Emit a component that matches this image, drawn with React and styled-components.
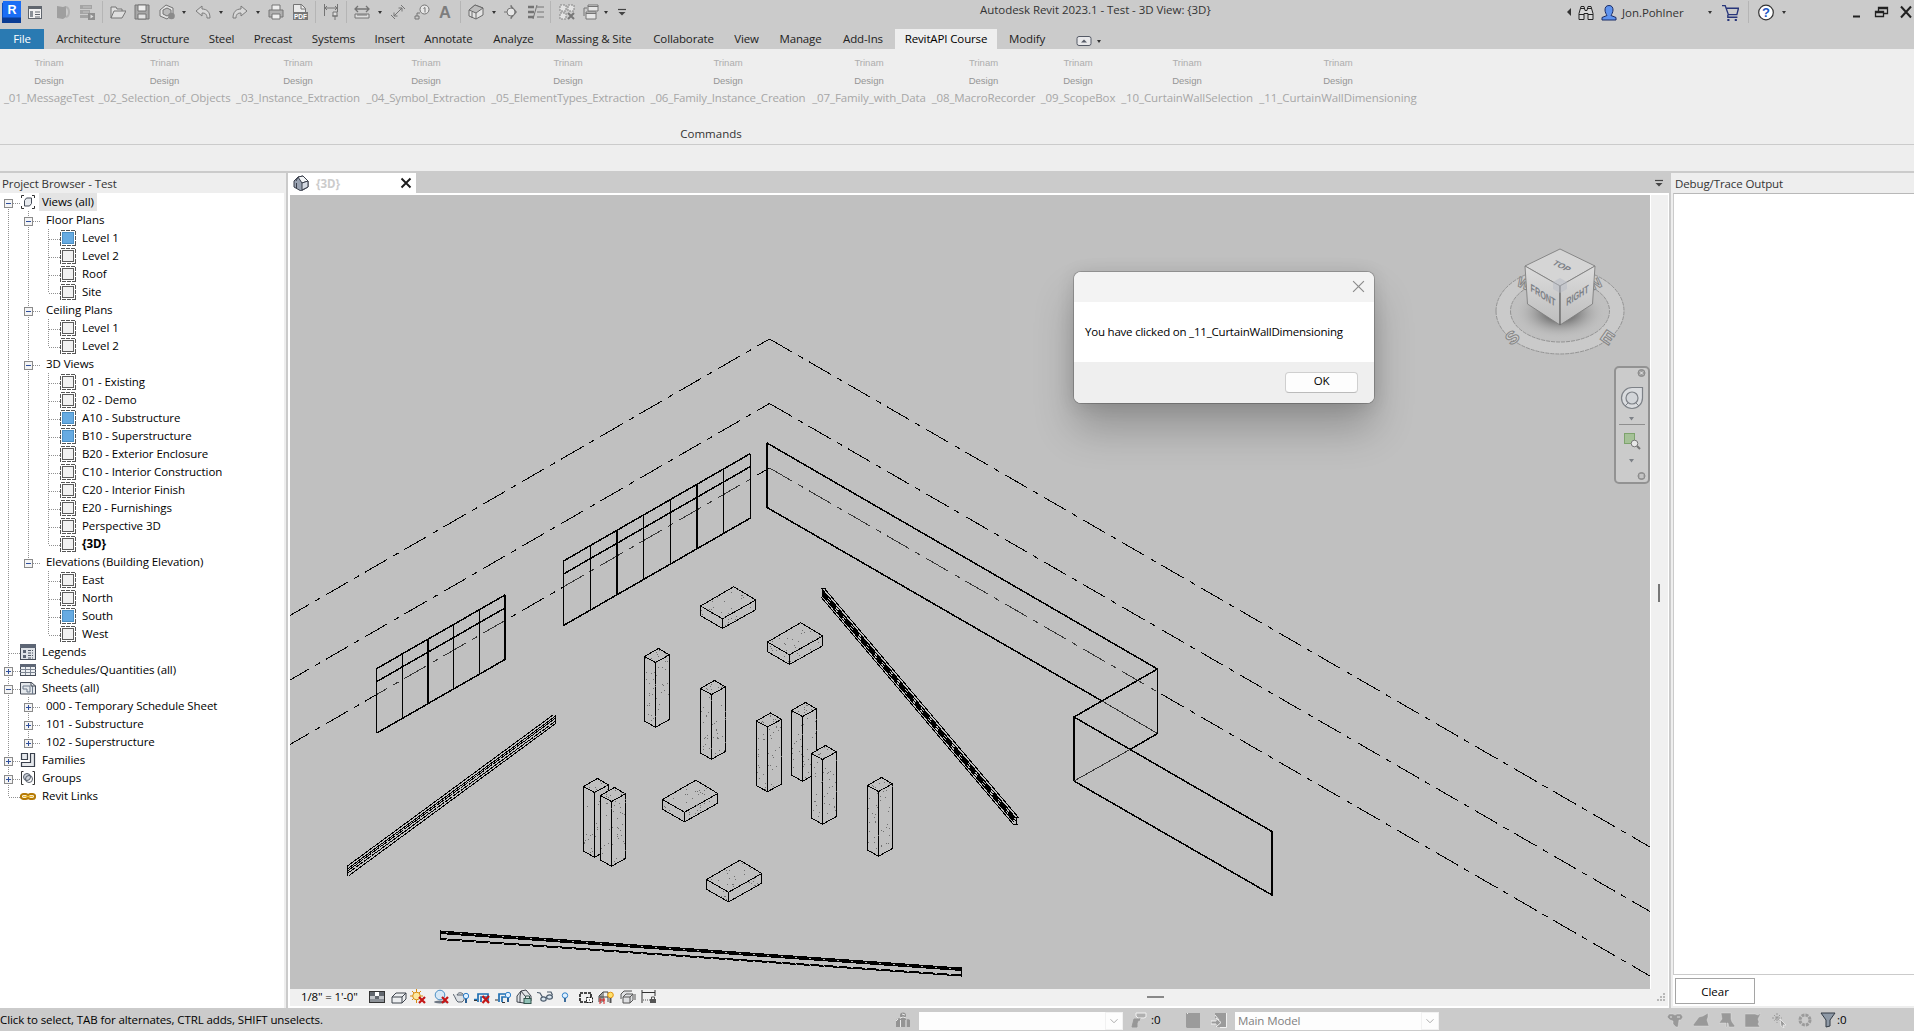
import React from "react";
import styled, { createGlobalStyle, css } from "styled-components";

const Global = createGlobalStyle`
  html, body { margin: 0; padding: 0; overflow: hidden; }
  * { box-sizing: border-box; }
  body { font-family: "Open Sans", "Noto Sans", sans-serif; font-size: 11.5px; color: #000; }
`;

const Window = styled.div`
  width: 1914px;
  height: 1031px;
  display: flex;
  flex-direction: column;
  background: #cbcbcb;
  white-space: nowrap;
`;

/* ---------- title bar ---------- */
const TitleBar = styled.header`
  height: 29px;
  display: flex;
  align-items: flex-start;
  flex: none;
`;
const QuickAccess = styled.div`
  width: 980px;
  display: flex;
  padding-left: 2px;
`;
const Slot = styled.span`
  flex: none;
  width: ${(p) => p.$w}px;
  height: 24px;
  margin-left: ${(p) => p.$gap || 0}px;
  display: flex;
  align-items: center;
  justify-content: center;
`;
const Separator = styled.i`
  flex: none;
  width: 1px;
  height: ${(p) => p.$h || 22}px;
  margin-top: 1px;
  margin-left: ${(p) => p.$gap}px;
  background: #b5b5b5;
`;
const Caret = styled.i`
  width: 0;
  height: 0;
  border: ${(p) => p.$size || 2.5}px solid transparent;
  border-top: 3px solid ${(p) => p.$c || "#333"};
  border-bottom: 0;
`;
const DocTitle = styled.h1`
  margin: 0;
  width: 586px;
  font-size: 11.5px;
  font-weight: 400;
  line-height: 20px;
  letter-spacing: -0.05px;
  color: #333;
`;
const Account = styled.div`
  display: flex;
  flex: 1;
`;
const UserName = styled.span`
  width: 63px;
  line-height: 25px;
  margin-left: 5px;
  letter-spacing: -0.05px;
  color: #333;
`;

/* ---------- ribbon ---------- */
const TabStrip = styled.nav`
  height: 20px;
  display: flex;
  flex: none;
`;
const Tab = styled.span`
  width: ${(p) => p.$w}px;
  margin-left: ${(p) => p.$gap || 0}px;
  line-height: 20px;
  letter-spacing: -0.13px;
  text-align: center;
  color: #222;
  ${(p) => p.$kind === "file" && css`background: #2a7ab2; color: #fff;`}
  ${(p) => p.$kind === "active" && css`background: #eee; color: #000;`}
`;
const Ribbon = styled.section`
  height: 96px;
  flex: none;
  background: #eee;
  border-bottom: 1px solid #cbcbcb;
  display: flex;
  flex-direction: column;
`;
const Commands = styled.div`
  height: 76px;
  display: flex;
  gap: 6px;
  padding: 4px 0 0 5px;
`;
const Command = styled.div`
  width: ${(p) => p.$w}px;
  display: flex;
  flex-direction: column;
  align-items: center;
  color: #a6a6a6;
`;
const Maker = styled.span`
  height: 18px;
  line-height: 19px;
  font-size: 9.5px;
  font-family: "Liberation Sans", Arial, sans-serif;
  color: ${(p) => p.$c};
`;
const CommandName = styled.span`
  height: 16px;
  line-height: 17px;
  letter-spacing: ${(p) => p.$ls}px;
`;
const PanelName = styled.span`
  width: 1422px;
  text-align: center;
  line-height: 18px;
  color: #333;
`;
const OptionsBar = styled.div`
  height: 26px;
  flex: none;
  background: #eee;
`;

/* ---------- work area ---------- */
const Workspace = styled.main`
  height: 837px;
  flex: none;
  display: flex;
  padding-top: 2px;
`;
const Browser = styled.aside`
  width: 286px;
  display: flex;
  flex-direction: column;
  background: #fff;
  border-right: 2px solid #eee;
`;
const PaneTitle = styled.div`
  height: 20px;
  flex: none;
  padding-left: ${(p) => p.$indent || 2}px;
  line-height: 21px;
  letter-spacing: -0.11px;
  background: #eee;
  color: #333;
  margin-right: ${(p) => p.$bleed || 0}px;
`;
const Row = styled.div`
  height: 18px;
  display: flex;
  align-items: center;
`;
const RowLabel = styled.span`
  height: 18px;
  line-height: 17px;
  letter-spacing: -0.07px;
  margin-left: 3px;
  padding: 0 3px;
  font-weight: ${(p) => (p.$bold ? 700 : 400)};
  background: ${(p) => (p.$hot ? "#e4e4e4" : "transparent")};
`;

const Document = styled.section`
  width: 1381px;
  margin-left: 2px;
  display: flex;
  flex-direction: column;
`;
const DocTabs = styled.div`
  height: 20px;
  display: flex;
  justify-content: space-between;
`;
const DocTab = styled.div`
  width: 128px;
  background: #fff;
  display: flex;
  align-items: center;
  padding-left: 5px;
`;
const DocTabName = styled.b`
  flex: 1;
  margin-left: 7px;
  font-weight: 700;
  color: #cccccc;
`;
const TabMenu = styled.span`
  display: flex;
  align-items: center;
  padding-right: 2px;
`;
const ViewFrame = styled.div`
  flex: 1;
  display: flex;
  flex-direction: column;
  background: #f0f0f0;
  border: 2px solid #fff;
  border-right-width: 1px;
`;
const ViewMain = styled.div`
  height: 794px;
  display: flex;
`;
const Canvas = styled.div`
  position: relative;
  width: 1360px;
  height: 794px;
  background: #c0c0c0;
  & > svg { display: block; }
`;
const VScroll = styled.div`
  width: 17px;
  border-left: 1px solid #fff;
  display: flex;
  justify-content: center;
  padding-top: 389px;
  &::after { content: ""; width: 2px; height: 18px; background: #777; }
`;
const ViewBar = styled.div`
  height: 17px;
  display: flex;
  align-items: center;
  padding-left: 11px;
  padding-bottom: 1px;
`;
const Scale = styled.span`
  width: 68px;
  line-height: 16px;
  letter-spacing: -0.15px;
`;
const HThumb = styled.i`
  width: 17px;
  height: 2px;
  margin-left: 490px;
  background: #888;
`;
const Grip = styled.i`
  margin-left: auto;
  margin-right: 3px;
  display: flex;
`;

const Output = styled.aside`
  width: 243px;
  margin-left: 2px;
  display: flex;
  flex-direction: column;
  background: #eee;
`;
const OutputBody = styled.div`
  flex: 1;
  margin-left: 2px;
  border-top: 1px solid #b8b8b8;
  border-left: 1px solid #cbcbcb;
  border-bottom: 1px solid #cbcbcb;
  background: #fff;
`;
const OutputFoot = styled.div`
  height: 31px;
  margin: 0 0 2px 2px;
  padding: 3px 0 0 2px;
  background: #fff;
`;
const ClearButton = styled.button`
  width: 80px;
  height: 26px;
  padding: 0;
  font: inherit;
  background: #fff;
  border: 1px solid #a5a5a5;
`;

/* ---------- dialog ---------- */
const Dialog = styled.div`
  position: absolute;
  left: 784px;
  top: 77px;
  width: 300px;
  height: 131px;
  display: flex;
  flex-direction: column;
  border-radius: 7px;
  overflow: hidden;
  background: #fff;
  box-shadow: 0 0 0 1px rgba(0, 0, 0, 0.2), 0 26px 40px rgba(0, 0, 0, 0.23), 0 2px 18px rgba(0, 0, 0, 0.12);
`;
const DialogTitle = styled.div`
  height: 30px;
  background: #f3f3f3;
  display: flex;
  justify-content: flex-end;
  padding: 8px 9px 0 0;
`;
const DialogText = styled.p`
  flex: 1;
  margin: 0;
  padding-left: 11px;
  line-height: 60px;
  letter-spacing: -0.21px;
`;
const DialogFoot = styled.div`
  height: 42px;
  background: #efefef;
  display: flex;
  justify-content: flex-end;
  padding: 10px 16px 0 0;
`;
const OkButton = styled.button`
  width: 73px;
  height: 21px;
  padding: 0 0 2px;
  font: inherit;
  letter-spacing: -0.3px;
  line-height: 16px;
  background: #fdfdfd;
  border: 1px solid #cfcfcf;
  border-bottom-color: #bbb;
  border-radius: 4px;
`;
const CubeLayer = styled.div`
  position: absolute;
  left: 1200px;
  top: 45px;
`;
const NavBar = styled.div`
  position: absolute;
  left: 1324px;
  top: 171px;
  width: 36px;
  height: 118px;
  border: 2px solid #929292;
  border-radius: 5px;
  background: #cbcbcb;
`;

/* ---------- status bar ---------- */
const StatusBar = styled.footer`
  height: 23px;
  display: flex;
  align-items: center;
`;
const Hint = styled.span`
  width: 895px;
  line-height: 26px;
  letter-spacing: -0.1px;
`;
const Combo = styled.div`
  width: 204px;
  height: 18px;
  margin: 2px 0 0 8px;
  padding-left: 3px;
  line-height: 17px;
  letter-spacing: -0.1px;
  background: #fdfdfd;
  color: #808080;
  display: flex;
  justify-content: space-between;
`;
const ComboArrow = styled.span`
  width: 18px;
  border: 1px solid #f1f1f1;
  display: flex;
  align-items: center;
  justify-content: center;
`;
const Count = styled.span`
  width: 12px;
  margin-left: ${(p) => p.$gap}px;
  line-height: 26px;
`;

/* ---------- icons ---------- */
const G = "#747474";
const DISABLED = { fill: "#999", stroke: "#e6e6e6", strokeWidth: 0.4 };
const ICONS = {
  revit: (
    <>
      <path d="M0 2l2-1v20l-2 1z" fill="#0a4fc0" />
      <rect x="1" y="0" width="18" height="17" fill="#1b6ef5" />
      <path d="M0 16.500h19V22H0z" fill="#0a3c94" />
      <text x="10" y="13" fontSize="12.500" fontWeight="700" textAnchor="middle" fill="#fff" fontFamily="Liberation Sans, sans-serif">R</text>
    </>
  ),
  props: (
    <>
      <rect x="1.500" y="2.500" width="13" height="12" fill="#f2f2f2" stroke="#60666e" />
      <path d="M1 2h14v3H1z" fill="#60666e" />
      <path d="M3 7h3v6H3z" fill="#8b9198" />
      <path d="M8 8h5M8 10.500h5M8 13h5" stroke="#60666e" />
    </>
  ),
  ghostA: (
    <>
      <path d="M2 2l6 1v12l-6-1zM8 3l3-1v11l-3 2z" fill="#9f9f9f" />
      <path d="M11 3c4 1 4 9 0 10" fill="none" stroke="#b2b2b2" strokeWidth="2" />
    </>
  ),
  ghostB: (
    <>
      <path d="M1 1h12v4H1zM1 6h10v4H1zM1 11h8v3H1z" fill="#a4a4a4" />
      <path d="M4 3h8M4 8h6" stroke="#c4c4c4" />
      <path d="M9 9h7v7H9z" fill="#8f8f8f" />
      <path d="M11.500 10.500l3 2-3 2z" fill="#ddd" />
    </>
  ),
  open: <path d="M1 14V3h5l1 2h5v2M1 14l3-7h12l-4 7z" fill="#dedede" stroke={G} />,
  save: (
    <>
      <path d="M1 1h14v14H1z" fill="#a6a6a6" stroke={G} />
      <path d="M4 1h8v6H4z" fill="#eee" stroke={G} />
      <path d="M4 10h8v5H4z" fill="#e2e2e2" stroke={G} />
    </>
  ),
  sync: (
    <>
      <path d="M1 6l6-5 7 3v6l-6 5-7-3z" fill="#e2e2e2" stroke={G} />
      <path d="M4 6l4-2 4 2v4l-4 2-4-2z" fill="#bbb" stroke={G} />
      <circle cx="12.500" cy="12" r="3.300" fill="#8a8a8a" />
    </>
  ),
  undo: <path d="M1 7l6-5v3c5 0 8 3 8 9h-3c0-4-2-5-5-5v3z" fill="#d8d8d8" stroke="#7c7c7c" />,
  redo: <path d="M15 7L9 2v3C4 5 1 8 1 14h3c0-4 2-5 5-5v3z" fill="#d8d8d8" stroke="#7c7c7c" />,
  print: (
    <>
      <path d="M4 6V1h8v5" fill="#eee" stroke={G} />
      <path d="M1 6h14v7H1z" fill="#b0b0b0" stroke={G} />
      <path d="M4 10h8v5H4z" fill="#eee" stroke={G} />
    </>
  ),
  pdf: (
    <>
      <path d="M1.500 .5h8l4 4v10h-12z" fill="#eaeaea" stroke={G} />
      <path d="M9 0v5h5" fill="none" stroke={G} />
      <rect x="1" y="8" width="15" height="8" fill="#777" />
      <text x="8.500" y="14.500" fontSize="6.500" fontWeight="700" textAnchor="middle" fill="#fff" fontFamily="Liberation Sans, sans-serif">PDF</text>
    </>
  ),
  align: (
    <>
      <path d="M1.500 0v12M14.500 0v8M2 4h12M4 2L2 4l2 2M12 2l2 2-2 2" fill="none" stroke={G} />
      <path d="M10 8h4v4h-4zM9 12h6M12 12v4" fill="#ddd" stroke={G} />
    </>
  ),
  measure: (
    <>
      <path d="M1 5h14M4 2L1 5l3 3M12 2l3 3-3 3" fill="none" stroke={G} strokeWidth="1.300" />
      <path d="M1 10h14v4H1zM4 10v2M6 10v2M8 10v2M10 10v2M12 10v2" fill="#ddd" stroke={G} />
    </>
  ),
  dim: <path d="M4 12l8-8M4 8.500V12h3.500M8.500 4H12v3.500M1 11l4 4M11 1l4 4" fill="none" stroke={G} />,
  tag: (
    <>
      <circle cx="10.500" cy="5.500" r="4.500" fill="#e6e6e6" stroke={G} />
      <path d="M6 9H3v3M1 12h4v3H1zM9.500 4.500l1.500-1v5" fill="none" stroke={G} />
    </>
  ),
  text: <text x="9" y="18.500" fontSize="18.500" fontWeight="700" textAnchor="middle" fill="#7d7d7d" fontFamily="Liberation Sans, sans-serif">A</text>,
  home: (
    <>
      <path d="M1 6l6-5 8 3v7l-7 4-7-3z" fill="#e3e3e3" stroke="#6a6a6a" />
      <path d="M1 6l6-5 8 3-7 5z" fill="#bdbdbd" stroke="#6a6a6a" />
      <path d="M8 9v6M4 8v6" fill="none" stroke="#6a6a6a" />
    </>
  ),
  section: (
    <>
      <path d="M8 1l6 7-6 7z" fill="#777" />
      <circle cx="8" cy="8" r="4" fill="#e6e6e6" stroke={G} />
      <path d="M1 8h3M8 1v2M8 13v2" stroke={G} />
    </>
  ),
  thin: (
    <>
      <path d="M0 3h6M0 8h6M0 13h6" stroke={G} strokeWidth="2.500" />
      <path d="M9 3h7M9 8h7M9 13h7M9 1L5 15" stroke={G} />
    </>
  ),
  closeViews: (
    <>
      <path d="M1 1h6v6H1zM9 1h6v6H9zM1 9h6v6H1z" fill="#e3e3e3" stroke="#848484" strokeDasharray="2 1" />
      <path d="M9 9l6 6M15 9l-6 6" stroke="#777" strokeWidth="2" />
    </>
  ),
  windows: (
    <>
      <path d="M5 1h10v6H5zM5 2.500h10" fill="#e6e6e6" stroke={G} />
      <path d="M3 8h10v7H3zM3 9.500h10" fill="#e6e6e6" stroke={G} />
      <path d="M1 12V4h3" fill="none" stroke={G} />
    </>
  ),
  custom: (
    <>
      <path d="M4 5.500h8" stroke="#444" strokeWidth="1.200" />
      <path d="M4.500 8h7L8 11.500z" fill="#444" />
    </>
  ),
  binoc: (
    <>
      <path d="M1 15V9l2-7h3l1 4h2l1-4h3l2 7v6h-5v-6H6v6z" fill="#d8d8d8" stroke="#222" />
      <path d="M3 4h3M10 4h3M1 10h5M10 10h5" stroke="#222" />
    </>
  ),
  user: <path d="M8 1c3 0 4 2 4 4.500S10.500 10 10 11l5 2v2.500H1V13l5-2C5.500 10 4 8 4 5.500S5 1 8 1z" fill="#5f93ee" stroke="#1b2c66" />,
  cart: (
    <>
      <path d="M0 1.500h3l3 8.500h8l1.500-6H4M5.500 10v2.500h9" fill="none" stroke="#27357a" strokeWidth="1.300" />
      <path d="M5 14h2v2H5zM12 14h2v2h-2z" fill="#27357a" />
    </>
  ),
  help: (
    <>
      <circle cx="8" cy="8" r="7.300" fill="#fff" stroke="#333" strokeWidth="1.200" />
      <text x="8" y="12.500" fontSize="13" fontWeight="700" textAnchor="middle" fill="#2257c4" fontFamily="Liberation Sans, sans-serif">?</text>
    </>
  ),
  min: <path d="M5 12.500h7" stroke="#222" strokeWidth="2" />,
  restore: <path d="M2.500 7.500h8v5h-8zM2.500 8.500h8M5.500 7V3.500h9v6h-4M5.500 4.500h9" fill="none" stroke="#222" strokeWidth="1.300" />,
  close: <path d="M3 2.500l10 11M13 2.500l-10 11" stroke="#222" strokeWidth="2" />,
  house: (
    <>
      <path d="M1 6l4-4 5-1 5 5v6l-7 4-7-4z" fill="#9aa3b2" stroke="#3a3f4b" />
      <path d="M5 2l5-1 5 5-6 2z" fill="#f3f5f7" stroke="#3a3f4b" />
      <path d="M9 8l6-2v6l-6 3z" fill="#d5dae2" stroke="#3a3f4b" />
      <path d="M3.500 8v5M5 2L3 6" stroke="#3a3f4b" />
    </>
  ),
  tabx: <path d="M3.500 3.500l9 9M12.500 3.500l-9 9" stroke="#1c1c1c" strokeWidth="1.900" />,
  views: (
    <>
      <path d="M4 1.500H1.500V4M12 1.500h2.500V4M4 14.500H1.500V12M12 14.500h2.500V12" fill="none" stroke="#333" />
      <path d="M4.500 6.500l2-2.500h5v5.500l-2 2.500h-5z" fill="#e8ebef" stroke="#444b57" />
    </>
  ),
  legends: (
    <>
      <rect x=".5" y=".5" width="15" height="15" fill="#dfe3e8" stroke="#444b57" />
      <path d="M0 0h16v4H0z" fill="#5d6675" />
      <path d="M3 6h3v3H3zM3 11h3v3H3z" fill="#5d6675" />
      <path d="M8 6.500h5M8 9h5M8 11.500h5M8 14h5" stroke="#4d5563" strokeDasharray="3 1" />
    </>
  ),
  sched: (
    <>
      <rect x=".5" y="2.500" width="15" height="11" fill="#eceff2" stroke="#444b57" />
      <path d="M0 2h16v3H0z" fill="#5d6675" />
      <path d="M0 7.500h16M0 10.500h16M5.500 5v8M10.500 5v8" stroke="#7c8593" />
    </>
  ),
  sheets: (
    <>
      <path d="M.5 2.500h11l4 3.500v8H.5z" fill="#e4e8ec" stroke="#444b57" />
      <path d="M3 6h7v6H7V9H3zM12.500 6v8" fill="none" stroke="#6d7a8c" />
      <path d="M11 2v4h5" fill="none" stroke="#444b57" />
    </>
  ),
  families: <path d="M1.500 1.500h6v6h-6zM10.500 1.500h4v13h-13v-4h9z" fill="#e6e9ed" stroke="#39404c" strokeWidth="1.200" />,
  groups: (
    <>
      <path d="M3.500 1.500h-2v13h2M12.500 1.500h2v13h-2" fill="none" stroke="#333" />
      <circle cx="7" cy="7" r="3.500" fill="#cfd4db" stroke="#555d6a" />
      <circle cx="9" cy="9" r="3.500" fill="none" stroke="#555d6a" />
    </>
  ),
  links: (
    <>
      <rect x="1" y="6" width="7" height="5" rx="2.500" fill="none" stroke="#b57a06" strokeWidth="2.200" />
      <rect x="8" y="6" width="7" height="5" rx="2.500" fill="none" stroke="#b57a06" strokeWidth="2.200" />
      <path d="M3 8.500h10" stroke="#edb92e" strokeWidth="1.500" />
    </>
  ),
  detail: (
    <>
      <rect x=".5" y="2.500" width="15" height="11" fill="#fff" stroke="#333" />
      <path d="M1 3h5v4H1zM10 3h5v4h-5zM6 7h4v3H6z" fill="#63686f" />
      <path d="M1 7h5v3H1zM10 7h5v3h-5z" fill="#c3c6ca" />
      <path d="M1 10h14v3H1z" fill="#8c9197" />
    </>
  ),
  box: <path d="M1 8l4-4h10v6l-4 4H1zM1 8h10v6M11 8l4-4" fill="#eceef0" stroke="#3f444d" />,
  sun: (
    <>
      <path d="M6.500 0v14M0 7h13M2 2l9 9M11 2l-9 9" stroke="#d88d12" />
      <circle cx="6.500" cy="7" r="3.800" fill="#fde9a0" stroke="#d88d12" />
      <path d="M9 8l6 6M15 8l-6 6" stroke="#c41616" strokeWidth="2.200" />
    </>
  ),
  shadow: (
    <>
      <ellipse cx="7" cy="13" rx="6" ry="1.500" fill="#6f7884" />
      <circle cx="7" cy="6" r="4.800" fill="#d7e8f6" stroke="#4d90c6" />
      <path d="M9 8l6 6M15 8l-6 6" stroke="#c41616" strokeWidth="2.200" />
    </>
  ),
  teapot: (
    <>
      <path d="M4 6h7c1 3 0 6-2 7H5C3 12 3 9 0 5M4 6c1-3 5-3 7 0" fill="#dde1e5" stroke="#59616c" />
      <circle cx="13" cy="7" r="2.700" fill="#dff0ff" stroke="#2e7fc8" />
      <path d="M13 10v4" stroke="#2b5f92" strokeWidth="2" />
    </>
  ),
  cropx: (
    <>
      <path d="M0 10.500h3M4 13V5h10v8M7 13V8h6" fill="none" stroke="#1f6fb2" strokeWidth="1.700" />
      <path d="M0 11.500h3" stroke="#333" />
      <path d="M8.500 7l6.500 7M15 7l-6.500 7" stroke="#c41616" strokeWidth="2.200" />
    </>
  ),
  cropb: (
    <>
      <path d="M4 13V5h7M7 13V8h4" fill="none" stroke="#1f6fb2" strokeWidth="1.700" />
      <path d="M0 11h3M7 13.500h3" stroke="#333" />
      <circle cx="13" cy="6" r="2.700" fill="#dff0ff" stroke="#2e7fc8" />
      <path d="M13 9v4" stroke="#2b5f92" strokeWidth="2" />
    </>
  ),
  lockhouse: (
    <>
      <path d="M1 7l4-5 5-1 5 6v5l-7 2-7-1z" fill="#e1e4e7" stroke="#3f444d" />
      <path d="M5 2L4 7v7M5 2l4 5" fill="none" stroke="#3f444d" />
      <rect x="8" y="9.500" width="7" height="5" fill="#8fc0b5" stroke="#33544c" />
      <path d="M9.500 9V7h4v2" fill="none" stroke="#33544c" />
    </>
  ),
  glasses: (
    <>
      <path d="M0 3.500l3 .5 3 5M10 3h4l1.500 3" fill="none" stroke="#4b5a6b" strokeWidth="1.200" />
      <ellipse cx="6.500" cy="10" rx="2.700" ry="2.200" fill="#d9e6f0" stroke="#4b5a6b" strokeWidth="1.200" />
      <ellipse cx="12.500" cy="8" rx="2.900" ry="2.200" fill="#d9e6f0" stroke="#4b5a6b" strokeWidth="1.200" />
    </>
  ),
  bulb: (
    <>
      <circle cx="8" cy="6.500" r="2.700" fill="#dff0ff" stroke="#2e7fc8" />
      <path d="M8 9v4" stroke="#2b5f92" strokeWidth="1.800" />
    </>
  ),
  dashed: (
    <>
      <path d="M2 4h11v9H2z" fill="none" stroke="#111" strokeWidth="1.600" strokeDasharray="3 1" />
      <rect x="8.500" y="8.500" width="6" height="5" fill="#fff" stroke="#111" strokeDasharray="2 1" />
      <path d="M11 11h1" stroke="#111" />
    </>
  ),
  grid: (
    <>
      <path d="M1 13V7l4-4h5v10M5 3v10M1 8h9M3 5v9" fill="none" stroke="#444" />
      <path d="M2 9v6M6 9v6M2 11h5" stroke="#d22" />
      <circle cx="12.500" cy="6" r="2.800" fill="#ffe16b" stroke="#e39412" />
      <path d="M12.500 9v5" stroke="#555" strokeWidth="2" />
    </>
  ),
  displace: <path d="M3 8h7v6H3zM3 8l3-3h7v6l-3 3M10 8l3-3M1 10V5l3-3h8M15 5v6" fill="#dfe0e2" stroke="#555" />,
  constraint: (
    <>
      <path d="M1 1v13M14 1v6M1 3.500h13" stroke="#333" />
      <path d="M2 11h7" stroke="#555" strokeDasharray="1 1" />
      <rect x="9" y="10" width="6" height="4" fill="#555" />
      <path d="M10.500 10V8h3v2" fill="none" stroke="#555" />
    </>
  ),
  people: (
    <>
      <path d="M1 15V8l3-2 2 1v8zM6 15V6h5v9zM11 15V8l2-1 2 1v7z" fill="#949494" />
      <circle cx="8" cy="3.500" r="3" fill="#949494" />
      <path d="M5.500 8v7M11 8v7M5 6l3-1 3 1M1 9l2-2M7 2l3 1" fill="none" stroke="#e8e8e8" />
    </>
  ),
  brush: (
    <>
      <path d="M5 1h10v4l-2 1H7L5 4z" fill="#b0b0b0" stroke="#f2f2f2" />
      <path d="M9 6l-1 3M3 7h5l-2 4v4H1z" fill="#979797" stroke="#979797" />
    </>
  ),
  book: (
    <>
      <path d="M1 1h14v15H2l-1-1z" fill="#9b9b9b" />
      <path d="M2 1.500h1" stroke="#eee" />
    </>
  ),
  arrowbox: (
    <>
      <path d="M4 1h11v14H4z" fill="#9b9b9b" />
      <path d="M0 9h5V6l5 4.500L5 15v-3H0z" fill="#9b9b9b" stroke="#f0f0f0" />
      <path d="M15.500 1v14.500H9M4 3l4 5" fill="none" stroke="#f0f0f0" />
    </>
  ),
  s1: (
    <>
      <path d="M0 5l2-3h4l2 1 2-1h4l2 3-2 3h-2l-1 7H9l-3-3V9L3 8z" {...DISABLED} />
      <path d="M3 5h2M10 5h3" stroke="#ddd" />
    </>
  ),
  s2: <path d="M0 13l6-8 4-1 5-3v4l-1 3 2 6H1z" {...DISABLED} />,
  s3: <path d="M2 1h10v6l1 3 3 4-1 1h-5l-1-4H8v4H7v-4H0l3-4z" {...DISABLED} />,
  s4: <path d="M0 2h10l3 1 3-2-3 6 1 3-1 2 2 3H0z" {...DISABLED} />,
  s5: (
    <>
      <path d="M6 1v10M1 6h10M3 3l6 6M9 3L3 9" fill="none" stroke="#999" strokeDasharray="2 1" />
      <path d="M9 7l6 6h-3l1 3-3-2z" fill="#999" stroke="#eee" strokeWidth=".8" />
    </>
  ),
  s6: <circle cx="8" cy="8" r="5" fill="none" stroke="#9b9b9b" strokeWidth="3" strokeDasharray="2.900 1" />,
  funnel: <path d="M1 1h14l-5 7v6l-4 1V8z" fill="#8e99a6" stroke="#333b45" />,
  chevron: <path d="M4 6l4 4 4-4" fill="none" stroke="#a0a0a0" />,
  dlgx: <path d="M3 3l10 10M13 3L3 13" stroke="#8c8c8c" strokeWidth="1.100" />,
  expand: (
    <>
      <rect x="1" y="3.500" width="14" height="9" rx="2" fill="#e8e8ea" stroke="#555a66" />
      <path d="M5 9.500h6l-3-3z" fill="#555a66" />
    </>
  ),
  grip: <path d="M6 0h2v2H6zM3 3h2v2H3zM6 3h2v2H6zM0 6h2v2H0zM3 6h2v2H3zM6 6h2v2H6z" fill="#b8b8b8" />,
};

const Icon = ({ name, w = 16, h = 16, box = "0 0 16 16" }) => (
  <svg width={w} height={h} viewBox={box}>
    {ICONS[name]}
  </svg>
);

/* ---------- data ---------- */
const QUICK = [
  ["props", 16, 6], ["ghostA", 16, 12], ["ghostB", 16, 8], ["|", 0, 7],
  ["open", 16, 7], ["save", 16, 8], ["sync", 17, 8], ["v", 7, 5], ["undo", 16, 8], ["v", 7, 6],
  ["redo", 16, 8], ["v", 7, 6], ["print", 16, 7], ["pdf", 16, 8], ["|", 0, 7],
  ["align", 16, 7], ["|", 0, 7], ["measure", 16, 7], ["v", 7, 6], ["dim", 16, 7], ["tag", 16, 8],
  ["text", 16, 7], ["|", 0, 7], ["home", 16, 7], ["v", 7, 6], ["section", 16, 6], ["thin", 17, 8],
  ["|", 0, 6], ["closeViews", 17, 7], ["windows", 17, 7], ["v", 7, 3], ["custom", 16, 5],
];
const TABS = [
  ["Architecture", 65], ["Structure", 48], ["Steel", 25], ["Precast", 38], ["Systems", 43],
  ["Insert", 29], ["Annotate", 49], ["Analyze", 41], ["Massing & Site", 79], ["Collaborate", 61],
  ["View", 25], ["Manage", 43], ["Add-Ins", 42],
];
const COMMANDS = [
  ["_01_MessageTest", 88, -0.15], ["_02_Selection_of_Objects", 131, -0.04], ["_03_Instance_Extraction", 124, -0.16],
  ["_04_Symbol_Extraction", 120, -0.14], ["_05_ElementTypes_Extraction", 152, -0.14], ["_06_Family_Instance_Creation", 156, -0.14],
  ["_07_Family_with_Data", 114, -0.12], ["_08_MacroRecorder", 103, -0.14], ["_09_ScopeBox", 74, -0.1],
  ["_10_CurtainWallSelection", 132, -0.1], ["_11_CurtainWallDimensioning", 158, -0.08],
];
const view = (label, on, extra) => ({ guides: ["line", "line", "tee"], check: true, on, label, ...extra });
const TREE = [
  { guides: ["minusTop"], icon: "views", label: "Views (all)", hot: true },
  { guides: ["line", "minus"], label: "Floor Plans" },
  view("Level 1", true), view("Level 2"), view("Roof"), view("Site", false, { last: true }),
  { guides: ["line", "minus"], label: "Ceiling Plans" },
  view("Level 1"), view("Level 2", false, { last: true }),
  { guides: ["line", "minus"], label: "3D Views" },
  view("01 - Existing"), view("02 - Demo"), view("A10 - Substructure", true), view("B10 - Superstructure", true),
  view("B20 - Exterior Enclosure"), view("C10 - Interior Construction"), view("C20 - Interior Finish"),
  view("E20 - Furnishings"), view("Perspective 3D"), view("{3D}", false, { bold: true, last: true }),
  { guides: ["line", "minusEnd"], label: "Elevations (Building Elevation)" },
  view("East", false, { open: true }), view("North", false, { open: true }),
  view("South", true, { open: true }), view("West", false, { open: true, last: true }),
  { guides: ["tee"], icon: "legends", label: "Legends" },
  { guides: ["plus"], icon: "sched", label: "Schedules/Quantities (all)" },
  { guides: ["minus"], icon: "sheets", label: "Sheets (all)" },
  { guides: ["line", "plus"], label: "000 - Temporary Schedule Sheet" },
  { guides: ["line", "plus"], label: "101 - Substructure" },
  { guides: ["line", "plusEnd"], label: "102 - Superstructure" },
  { guides: ["plus"], icon: "families", label: "Families" },
  { guides: ["plus"], icon: "groups", label: "Groups" },
  { guides: ["end"], icon: "links", label: "Revit Links" },
];

function Guide({ kind }) {
  const button = kind.startsWith("plus") || kind.startsWith("minus");
  const top = kind === "minusTop" ? 10 : 0;
  const bottom = kind === "end" || kind.endsWith("End") ? 10 : 18;
  return (
    <svg width="20" height="18" viewBox="0 0 20 18" shapeRendering="crispEdges">
      {kind !== "none" && (
        <path d={`M8.500 ${top}V${bottom}`} stroke="#909090" strokeDasharray="1 1" />
      )}
      {kind !== "none" && kind !== "line" && <path d="M9 10.500H20" stroke="#909090" strokeDasharray="1 1" />}
      {button && (
        <>
          <rect x="4.500" y="6.500" width="8" height="8" fill="#f4f4f4" stroke="#8a8a8a" />
          <path d={kind.startsWith("plus") ? "M6 10.500h5M8.500 8v5" : "M6 10.500h5"} stroke="#2f4f9c" />
        </>
      )}
    </svg>
  );
}

const ViewMark = ({ on }) => (
  <svg width="16" height="16" viewBox="0 0 16 16" shapeRendering="crispEdges">
    <rect x=".5" y=".5" width="15" height="15" fill="#fff" stroke="#555" strokeDasharray="4 1" />
    <rect x="2.500" y="2.500" width="11" height="11" fill={on ? "#67abe2" : "#f2f2f2"} stroke={on ? "#4a8fc4" : "#5c5c5c"} />
  </svg>
);

function TreeRow({ item }) {
  const guides = item.guides.map((g, i) => {
    if (item.check && i === 2 && item.last) return "end";
    if (item.check && i === 1 && item.open) return "none";
    return g;
  });
  return (
    <Row>
      {guides.map((g, i) => <Guide key={i} kind={g} />)}
      {item.check && <ViewMark on={item.on} />}
      {item.icon && <Icon name={item.icon} />}
      <RowLabel $hot={item.hot} $bold={item.bold}>{item.label}</RowLabel>
    </Row>
  );
}

/* ---------- model drawing ---------- */
const dots = (seed, n) => {
  let s = seed;
  const next = () => {
    s = (s * 16807) % 2147483647;
    return s / 2147483647;
  };
  for (let i = 0; i < 5; i++) next();
  return Array.from({ length: n }, () => [next(), next()]);
};

function Block({ x, y, top, right, center, h, n, seed }) {
  const p = (dx, dy) => `${x + dx} ${y + dy}`;
  const outline = `M${p(0, 0)}L${p(...top)}L${p(...right)}L${p(right[0], right[1] + h)}L${p(center[0], center[1] + h)}L${p(0, h)}Z`;
  const edges = `M${p(0, 0)}L${p(...center)}L${p(...right)}M${p(...center)}V${y + center[1] + h}`;
  const specks = dots(seed, n).map(([a, b]) => {
    const px = a * right[0];
    const base = px < center[0]
      ? (px / center[0]) * center[1]
      : center[1] + ((px - center[0]) / (right[0] - center[0])) * (right[1] - center[1]);
    return `M${Math.round(x + px)} ${Math.round(y + base + 1 + b * (h - 2))}h1v1h-1z`;
  });
  const topSpecks = dots(seed + 77, Math.round(right[0] / 3)).map(([a, b]) => {
    const tx = center[0] * a + top[0] * b;
    const ty = center[1] * a + top[1] * b;
    return `M${Math.round(x + tx)} ${Math.round(y + ty)}h1v1h-1z`;
  });
  return (
    <g>
      <path d={outline} fill="#c0c0c0" stroke="#000" />
      <path d={edges} fill="none" stroke="#000" />
      <path d={specks.join("") + topSpecks.join("")} fill="#707070" />
    </g>
  );
}

const COLUMNS = [
  [644.500, 656.500], [700.500, 688.500], [756.500, 721], [791.500, 710.500], [811.500, 753.500], [867.500, 785.500], [583.500, 786.500], [600.500, 795.500],
];
const FOOTINGS = [[700.500, 606], [767.500, 642], [662.500, 799.500], [706.500, 879.500]];

function Curtain({ x1, x2, y1, y2, thin, thick }) {
  const at = (x) => y1 + ((x - x1) * (y2 - y1)) / (x2 - x1);
  return (
    <g fill="none" stroke="#000">
      <path d={`M${x1} ${y1}L${x2} ${y2}M${x1} ${y1 + 13}L${x2} ${y2 + 13}M${x1} ${y1 + 64.500}L${x2} ${y2 + 64.500}`} strokeWidth="1.500" />
      <path d={thin.map((x) => `M${x} ${at(x)}v64.500`).join("")} />
      <path d={thick.map((x) => `M${x} ${at(x)}v64.500`).join("")} strokeWidth="2" />
    </g>
  );
}

/* parallel strokes interpolated between the two long edges of a steel section */
const strands = (a, b, at) =>
  at.map((t) => {
    const mix = (i) => a[i] + (b[i] - a[i]) * t;
    return `M${mix(0)} ${mix(1)}L${mix(2)} ${mix(3)}`;
  }).join("");

function Model() {
  return (
    <svg width="1360" height="794" viewBox="290 195 1360 794" shapeRendering="crispEdges">
      <g fill="none" stroke="#000" strokeDasharray="25.600 7 5.800 6.860">
        {[339, 403.500, 468].map((y) => (
          <g key={y}>
            <path d={`M290 ${y + 276.500}L769.500 ${y}`} strokeDashoffset="3.700" />
            <path d={`M769.500 ${y}L1650 ${y + 508}`} />
          </g>
        ))}
      </g>
      <g stroke="#c0c0c0" strokeWidth="2" opacity=".28">
        <path d="M377 694.500L505 620.500M564 586.500L750 479.500M769 468L1157 691.700" />
      </g>
      <Curtain x1={376.500} x2={505} y1={668.700} y2={595} thin={[376.500, 402.500, 453.500, 479.500]} thick={[428, 505]} />
      <Curtain x1={563.500} x2={750.500} y1={561} y2={453.500} thin={[563.500, 590.500, 643.500, 670.500, 723.500, 750.500]} thick={[617, 697]} />
      <g fill="none" stroke="#000">
        <path d="M767 443V508M1074 717V781" strokeWidth="2" />
        <path d="M767 443L1157.500 669L1074 717L1272 831.500V895L1074 781M767 507.500L1102 701" strokeWidth="1.500" />
        <path d="M1157.500 669V733.500L1130 749.500" strokeWidth="1.500" />
        <path d="M1102 701L1157.500 733.500M1130 749.500L1074 781" stroke="#333" />
      </g>
      {FOOTINGS.map(([x, y], i) => (
        <Block key={i} x={x} y={y} top={[33.300, -19.300]} right={[55.300, -6]} center={[22, 12.700]} h={9.700} n={12} seed={911 + i * 37} />
      ))}
      {COLUMNS.map(([x, y], i) => (
        <Block key={i} x={x} y={y} top={[14, -8]} right={[25, -1.700]} center={[11, 6]} h={64.700} n={36} seed={4001 + i * 53} />
      ))}
      <g fill="none" stroke="#000">
        <path d={strands([824, 588, 1018, 817], [821, 597, 1013, 824], [0, 0.28, 0.52, 0.76, 1])} />
        <path d={strands([824, 588, 1018, 817], [821, 597, 1013, 824], [0.4, 0.64])} strokeDasharray="8 4" />
        <path d="M821 588.500h5M822.500 588v9M1013 817.500h6M1016.500 817v7M1013 824.500h5" />
        <path d="M347.500 866L553 715M348 868.500L555 716.500M349 875.500L555 724" />
        <path d="M348 870.500L555 718.500M348 873L555 721.500" strokeDasharray="9 1" />
        <path d="M347.500 866v10M555.500 714.500v9" />
        <path d="M440 931.500L961.500 968.500M440 939L961.500 975.500" strokeWidth="2" />
        <path d="M440 933L961.500 970" strokeWidth="2" />
        <path d="M440.500 930v9M961.500 967v10" />
      </g>
      <g stroke="#c0c0c0" strokeDasharray="2 12">
        <path d="M446 932.500L960 969M446 939.500L960 975.500" />
      </g>
    </svg>
  );
}

function ViewCube() {
  const face = { fontFamily: "Liberation Sans, sans-serif", fontWeight: 700, fill: "#7c8086", textAnchor: "middle" };
  return (
    <svg width="144" height="120" viewBox="1490 240 144 120">
      <defs>
        <radialGradient id="cubeShade">
          <stop offset="0.3" stopColor="#777" />
          <stop offset="1" stopColor="#c0c0c0" stopOpacity="0" />
        </radialGradient>
        <linearGradient id="cubeFace" x1="0" y1="0" x2="0" y2="1">
          <stop offset="0" stopColor="#dcdcdc" />
          <stop offset="1" stopColor="#bdbdbd" />
        </linearGradient>
      </defs>
      <path fillRule="evenodd" d="M1496 311a64 43 0 1 0 128 0a64 43 0 1 0-128 0M1510.500 311a49.500 31 0 1 0 99 0a49.500 31 0 1 0-99 0" fill="#cacaca" stroke="#939393" strokeDasharray="4 1" />
      <ellipse cx="1560" cy="313" rx="46" ry="26" fill="url(#cubeShade)" />
      <g fontFamily="Liberation Sans, sans-serif" fontWeight="700" fill="#cfcfcf" stroke="#848484" strokeWidth=".9" textAnchor="middle">
        <text transform="translate(1516 342) rotate(-40) scale(1.1 1)" fontSize="17">S</text>
        <text transform="translate(1604 342) rotate(35) scale(1.1 1)" fontSize="17">E</text>
        <text transform="translate(1522 288) rotate(25)" fontSize="14">W</text>
        <text transform="translate(1598 288) rotate(-25)" fontSize="14">N</text>
      </g>
      <g stroke="#7f7f7f" strokeWidth=".9">
        <path d="M1560 249L1595 266L1560 286L1525 266Z" fill="#d5d5d5" />
        <path d="M1525 266L1560 286V325L1527.500 304Z" fill="url(#cubeFace)" />
        <path d="M1595 266L1560 286V325L1592.500 304Z" fill="url(#cubeFace)" />
      </g>
      <path d="M1560 286v39" stroke="#666" />
      <path d="M1553 282l7-4 7 4v7l-7 4-7-4z" fill="#b8bcc6" opacity=".5" />
      <text {...face} fontSize="9.500" transform="matrix(.82 .42 -.7 .6 1559.500 268)">TOP</text>
      <text {...face} fontSize="11" transform="matrix(.66 .42 0 1 1543 299)">FRONT</text>
      <text {...face} fontSize="11" transform="matrix(.66 -.42 0 1 1577.500 299)">RIGHT</text>
    </svg>
  );
}

function NavTools() {
  return (
    <svg width="32" height="114" viewBox="1616 368 32 114">
      <g fill="#9a9a9a" stroke="#8a8a8a">
        <circle cx="1641.500" cy="373" r="3.500" />
        <circle cx="1641.500" cy="476" r="3.500" />
      </g>
      <path d="M1640 371.500l3 3M1643 371.500l-3 3M1639.500 475h4M1639.500 477h4" stroke="#eee" />
      <path d="M1632 387.500h10.500v10.500a10.500 10.500 0 1 1-10.500-10.500z" fill="#dadcdf" stroke="#7d8187" strokeWidth="1.200" />
      <circle cx="1632" cy="398" r="6" fill="#d2d5d9" stroke="#7d8187" strokeWidth="1.200" />
      <path d="M1628 403l-3 3M1636 403l3 3" stroke="#7d8187" />
      <path d="M1629 417h5l-2.500 3.500zM1629 459h5l-2.500 3.500z" fill="#7d8187" />
      <path d="M1619 424.500h26" stroke="#8e8e8e" />
      <rect x="1624.500" y="433.500" width="10" height="10" fill="#a5c197" stroke="#7da36c" />
      <circle cx="1634.500" cy="443.500" r="3.300" fill="#e8e8e8" stroke="#777" />
      <path d="M1637 446l3 3" stroke="#777" strokeWidth="2" />
    </svg>
  );
}

const VIEW_TOOLS = [
  ["detail", 16, 0], ["box", 16, 6], ["sun", 16, 3], ["shadow", 16, 7], ["teapot", 16, 4], ["cropx", 16, 5],
  ["cropb", 16, 5], ["lockhouse", 16, 5], ["glasses", 16, 5], ["bulb", 16, 4], ["dashed", 16, 5],
  ["grid", 16, 4], ["displace", 16, 6], ["constraint", 16, 5],
];

export default function App() {
  return (
    <Window>
      <Global />
      <TitleBar>
        <QuickAccess>
          <Icon name="revit" w={19} h={23} box="0 -1 19 23" />
          {QUICK.map(([name, w, gap], i) => {
            if (name === "|") return <Separator key={i} $gap={gap} />;
            return (
              <Slot key={i} $w={w} $gap={gap}>
                {name === "v" && <Caret />}
                {name === "text" && <Icon name="text" w={18} h={24} box="0 0 18 24" />}
                {name !== "v" && name !== "text" && <Icon name={name} />}
              </Slot>
            );
          })}
        </QuickAccess>
        <DocTitle>Autodesk Revit 2023.1 - Test - 3D View: {"{3D}"}</DocTitle>
        <Account>
          <Slot $w={5}>
            <svg width="4" height="8" viewBox="0 0 4 8"><path d="M4 0v8L0 4z" fill="#333" /></svg>
          </Slot>
          <Slot $w={16} $gap={7}><Icon name="binoc" w={17} h={17} /></Slot>
          <Slot $w={16} $gap={7}><Icon name="user" w={17} h={17} /></Slot>
          <UserName>Jon.Pohlner</UserName>
          <Slot $w={7} $gap={21}><Caret /></Slot>
          <Slot $w={17} $gap={9}><Icon name="cart" w={17} h={17} /></Slot>
          <Separator $gap={9} />
          <Slot $w={16} $gap={9}><Icon name="help" w={17} h={17} /></Slot>
          <Slot $w={7} $gap={6}><Caret /></Slot>
          <Slot $w={16} $gap={61}><Icon name="min" /></Slot>
          <Slot $w={16} $gap={9}><Icon name="restore" /></Slot>
          <Slot $w={16} $gap={9}><Icon name="close" /></Slot>
        </Account>
      </TitleBar>

      <TabStrip>
        <Tab $w={44} $kind="file">File</Tab>
        {TABS.map(([label, w], i) => (
          <Tab key={label} $w={w + 20} $gap={i ? 0 : 2}>{label}</Tab>
        ))}
        <Tab $w={102} $gap={1} $kind="active">RevitAPI Course</Tab>
        <Tab $w={60}>Modify</Tab>
        <Slot $w={16} $gap={19}><Icon name="expand" /></Slot>
        <Slot $w={7} $gap={3}><Caret /></Slot>
      </TabStrip>

      <Ribbon>
        <Commands>
          {COMMANDS.map(([label, w, ls]) => (
            <Command key={label} $w={w}>
              <Maker $c="#adadad">Trinam</Maker>
              <Maker $c="#959595">Design</Maker>
              <CommandName $ls={ls}>{label}</CommandName>
            </Command>
          ))}
        </Commands>
        <PanelName>Commands</PanelName>
      </Ribbon>
      <OptionsBar />

      <Workspace>
        <Browser>
          <PaneTitle $bleed={-2}>Project Browser - Test</PaneTitle>
          {TREE.map((item, i) => <TreeRow key={i} item={item} />)}
        </Browser>

        <Document>
          <DocTabs>
            <DocTab>
              <Icon name="house" />
              <DocTabName>{"{3D}"}</DocTabName>
              <Slot $w={20}><Icon name="tabx" /></Slot>
            </DocTab>
            <TabMenu><Icon name="custom" /></TabMenu>
          </DocTabs>
          <ViewFrame>
            <ViewMain>
              <Canvas>
                <Model />
                <CubeLayer><ViewCube /></CubeLayer>
                <NavBar><NavTools /></NavBar>
                <Dialog>
                  <DialogTitle><Icon name="dlgx" w={13} h={13} box="2 2 12 12" /></DialogTitle>
                  <DialogText>You have clicked on _11_CurtainWallDimensioning</DialogText>
                  <DialogFoot><OkButton>OK</OkButton></DialogFoot>
                </Dialog>
              </Canvas>
              <VScroll />
            </ViewMain>
            <ViewBar>
              <Scale>1/8" = 1'-0"</Scale>
              {VIEW_TOOLS.map(([name, w, gap]) => (
                <Slot key={name} $w={w} $gap={gap}><Icon name={name} /></Slot>
              ))}
              <HThumb />
              <Grip><Icon name="grip" w={8} h={8} box="0 0 8 8" /></Grip>
            </ViewBar>
          </ViewFrame>
        </Document>

        <Output>
          <PaneTitle $indent={4}>Debug/Trace Output</PaneTitle>
          <OutputBody />
          <OutputFoot><ClearButton>Clear</ClearButton></OutputFoot>
        </Output>
      </Workspace>

      <StatusBar>
        <Hint>Click to select, TAB for alternates, CTRL adds, SHIFT unselects.</Hint>
        <Slot $w={16}><Icon name="people" /></Slot>
        <Combo><span /><ComboArrow><Icon name="chevron" w={14} h={14} /></ComboArrow></Combo>
        <Slot $w={16} $gap={8}><Icon name="brush" /></Slot>
        <Count $gap={4}>:0</Count>
        <Slot $w={16} $gap={22}><Icon name="book" /></Slot>
        <Slot $w={16} $gap={10}><Icon name="arrowbox" /></Slot>
        <Combo><span>Main Model</span><ComboArrow><Icon name="chevron" w={14} h={14} /></ComboArrow></Combo>
        <Slot $w={16} $gap={228}><Icon name="s1" /></Slot>
        {["s2", "s3", "s4", "s5", "s6"].map((n) => (
          <Slot key={n} $w={16} $gap={10}><Icon name={n} /></Slot>
        ))}
        <Slot $w={16} $gap={7}><Icon name="funnel" /></Slot>
        <Count $gap={1}>:0</Count>
      </StatusBar>
    </Window>
  );
}
